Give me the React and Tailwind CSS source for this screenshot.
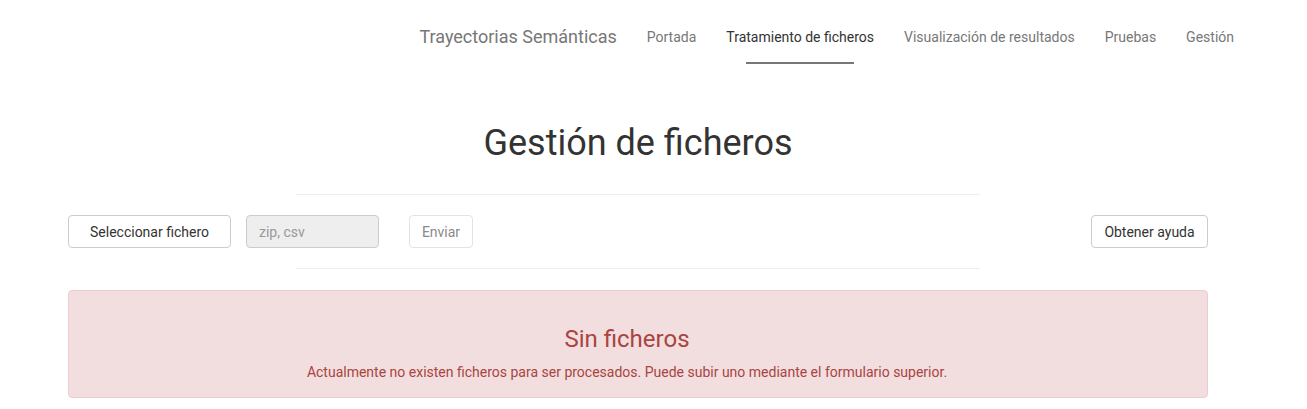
import React from "react";

const links = [
  { label: "Portada" },
  { label: "Tratamiento de ficheros", active: true },
  { label: "Visualización de resultados" },
  { label: "Pruebas" },
  { label: "Gestión" },
];

export default function App() {
  return (
    <div className="min-h-screen bg-white text-[#333] font-['Roboto','Liberation_Sans',sans-serif]">
      <header className="flex justify-end items-start pr-[73px] h-[75px]">
        <span className="pt-[27px] text-[18px] leading-[20px] text-[#777] mr-[30px]">
          Trayectorias Semánticas
        </span>
        <nav className="flex gap-[30px]">
          {links.map((l) => (
            <a key={l.label} href="#" className="flex flex-col items-center">
              <span
                className={
                  "pt-[27px] text-[14px] leading-[20px] " +
                  (l.active ? "text-[#333]" : "text-[#777]")
                }
              >
                {l.label}
              </span>
              {l.active && <span className="mt-[15px] h-[2px] w-[calc(100%-40px)] bg-[#777]" />}
            </a>
          ))}
        </nav>
      </header>

      <main className="ml-[53px] w-[1170px] px-[15px]">
        <h1 className="mt-[48px] text-center text-[36px] leading-[40px] font-normal text-[#333]">
          Gestión de ficheros
        </h1>
        <hr className="mx-auto mt-[31px] w-[60%] border-0 border-t border-[#eee]" />

        <div className="flex items-center my-[20px] text-[14px]">
          <button className="w-[163px] h-[33px] pt-px rounded-[4px] border border-[#ccc] bg-white text-[#333]">
            Seleccionar fichero
          </button>
          <input
            disabled
            placeholder="zip, csv"
            className="ml-[15px] w-[133px] h-[33px] pt-px rounded-[4px] border border-[#ccc] bg-[#eee] px-[12px] placeholder:text-[#999]"
          />
          <button className="ml-[30px] w-[64px] h-[33px] pt-px rounded-[4px] border border-[#e3e3e3] bg-white text-[#8a8a8a]">
            Enviar
          </button>
          <button className="ml-auto w-[117px] h-[33px] pt-px rounded-[4px] border border-[#ccc] bg-white text-[#333]">
            Obtener ayuda
          </button>
        </div>

        <hr className="mx-auto w-[60%] border-0 border-t border-[#eee]" />

        <div className="mt-[21px] rounded-[4px] border border-[#ebccd1] bg-[#f2dede] text-[#a94442] text-center pl-[15px] pr-[37px] pt-[35px] pb-[15px]">
          <h3 className="text-[24px] leading-[26px] font-normal mb-[10px]">Sin ficheros</h3>
          <p className="text-[14px] leading-[20px]">
            Actualmente no existen ficheros para ser procesados. Puede subir uno mediante el formulario superior.
          </p>
        </div>
      </main>
    </div>
  );
}
